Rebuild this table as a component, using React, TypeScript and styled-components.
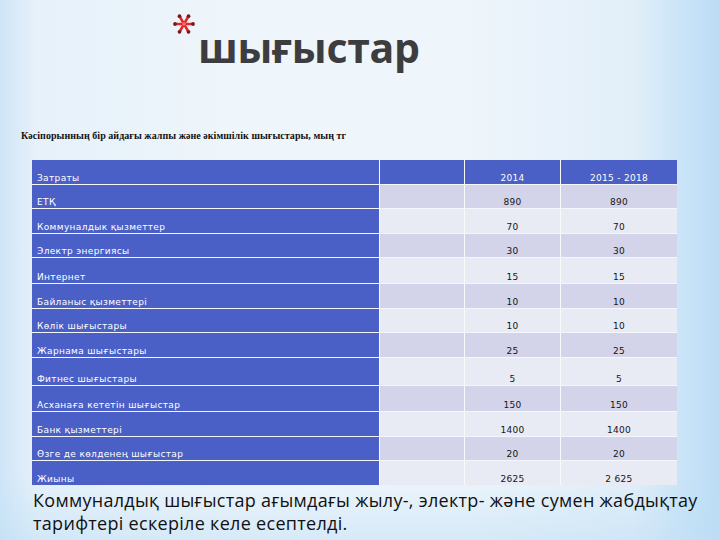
import React from "react";
import styled, { createGlobalStyle } from "styled-components";

const Global = createGlobalStyle`
  html, body { margin: 0; padding: 0; }
  body { width: 720px; height: 540px; overflow: hidden; }
`;

const Page = styled.div`
  width: 720px;
  height: 540px;
  box-sizing: border-box;
  display: flex;
  flex-direction: column;
  background:
    linear-gradient(180deg, rgba(255,255,255,0) 0%, rgba(255,255,255,0) 88%, rgba(190,222,245,0.5) 100%),
    linear-gradient(90deg, #cfe5f7 0%, #e6f1fa 5%, #eff6fb 35%, #eef5fb 65%, #e2eff9 88%, #c5e2f7 96%, #bcdcf5 100%);
`;

const TitleBar = styled.div`
  height: 80px;
  display: flex;
  align-items: flex-start;
  padding-left: 172px;
  box-sizing: border-box;
`;

const Star = styled.svg`
  width: 24px;
  height: 24px;
  margin-top: 12px;
  flex: none;
`;

const TitleText = styled.h1`
  margin: 27px 0 0 2px;
  font-family: "Open Sans", "DejaVu Sans", sans-serif;
  font-weight: 700;
  font-size: 41px;
  line-height: 41px;
  color: #3d3d3f;
  letter-spacing: -0.3px;
`;

const Caption = styled.div`
  margin-top: 50px;
  padding-left: 21px;
  font-family: "Liberation Serif", "DejaVu Serif", serif;
  font-weight: 700;
  font-size: 10px;
  line-height: 12px;
  color: #111;
  letter-spacing: 0.05px;
`;

const Table = styled.div`
  margin: 18px 0 0 32px;
  width: 645px;
  display: flex;
  flex-direction: column;
  gap: 1px;
  background: #f4f7fb;
`;

const Row = styled.div<{ $h: number }>`
  display: grid;
  grid-template-columns: 347px 84px 95px 116px;
  gap: 1px;
  height: ${(p) => p.$h - 1}px;
  background: #f8fafc;
`;

const LabelCell = styled.div`
  background: #4a60c7;
  color: #fff;
  font-family: "DejaVu Sans", Verdana, sans-serif;
  font-size: 9px;
  letter-spacing: 0.35px;
  display: flex;
  align-items: flex-end;
  padding: 0 0 1px 5px;
  white-space: nowrap;
`;

const ValueCell = styled.div<{ $tone: "head" | "dark" | "light" }>`
  background: ${(p) =>
    p.$tone === "head" ? "#4a60c7" : p.$tone === "dark" ? "#d3d4ea" : "#e8eaf4"};
  color: ${(p) => (p.$tone === "head" ? "#fff" : "#141414")};
  font-family: "DejaVu Sans", Verdana, sans-serif;
  font-size: 9px;
  letter-spacing: 0.3px;
  display: flex;
  align-items: flex-end;
  justify-content: center;
  padding-bottom: 1px;
  white-space: nowrap;
`;

const Note = styled.p`
  margin: 4px 0 0 33px;
  width: 684px;
  font-family: "Open Sans", "DejaVu Sans", sans-serif;
  font-size: 18px;
  line-height: 23px;
  color: #111;
  letter-spacing: 0.3px;
`;

type R = { label: string; a: string; b: string; h: number };

const rows: R[] = [
  { label: "ЕТҚ", a: "890", b: "890", h: 24 },
  { label: "Коммуналдык қызметтер", a: "70", b: "70", h: 25 },
  { label: "Электр энергиясы", a: "30", b: "30", h: 24 },
  { label: "Интернет", a: "15", b: "15", h: 26 },
  { label: "Байланыс қызметтері", a: "10", b: "10", h: 25 },
  { label: "Көлік шығыстары", a: "10", b: "10", h: 24 },
  { label: "Жарнама шығыстары", a: "25", b: "25", h: 25 },
  { label: "Фитнес шығыстары", a: "5", b: "5", h: 28 },
  { label: "Асханаға кететін шығыстар", a: "150", b: "150", h: 26 },
  { label: "Банк қызметтері", a: "1400", b: "1400", h: 25 },
  { label: "Өзге де көлденең шығыстар", a: "20", b: "20", h: 24 },
  { label: "Жиыны", a: "2625", b: "2 625", h: 25 },
];

const arms = [0, 60, 120, 180, 240, 300];

export default function App() {
  return (
    <Page>
      <Global />
      <TitleBar>
        <Star viewBox="0 0 24 24">
          {arms.map((d) => {
            const r = (d * Math.PI) / 180;
            const x = 12 + Math.cos(r) * 9;
            const y = 12 + Math.sin(r) * 9;
            return (
              <g key={d}>
                <line x1="12" y1="12" x2={x} y2={y} stroke="#e3262b" strokeWidth="2.6" strokeLinecap="round" />
                <circle cx={x} cy={y} r="1.9" fill="#7e1a1c" />
              </g>
            );
          })}
          <circle cx="12" cy="12" r="2" fill="#f06a5a" />
        </Star>
        <TitleText>шығыстар</TitleText>
      </TitleBar>
      <Caption>Кәсіпорынның бір айдағы жалпы және әкімшілік шығыстары, мың тг</Caption>
      <Table>
        <Row $h={25}>
          <LabelCell>Затраты</LabelCell>
          <ValueCell $tone="head" />
          <ValueCell $tone="head">2014</ValueCell>
          <ValueCell $tone="head">2015 - 2018</ValueCell>
        </Row>
        {rows.map((r, i) => {
          const tone = i % 2 === 0 ? "dark" : "light";
          return (
            <Row key={r.label} $h={r.h}>
              <LabelCell>{r.label}</LabelCell>
              <ValueCell $tone={tone} />
              <ValueCell $tone={tone}>{r.a}</ValueCell>
              <ValueCell $tone={tone}>{r.b}</ValueCell>
            </Row>
          );
        })}
      </Table>
      <Note>
        Коммуналдық шығыстар ағымдағы жылу-, электр- және сумен жабдықтау тарифтері ескеріле келе есептелді.
      </Note>
    </Page>
  );
}
